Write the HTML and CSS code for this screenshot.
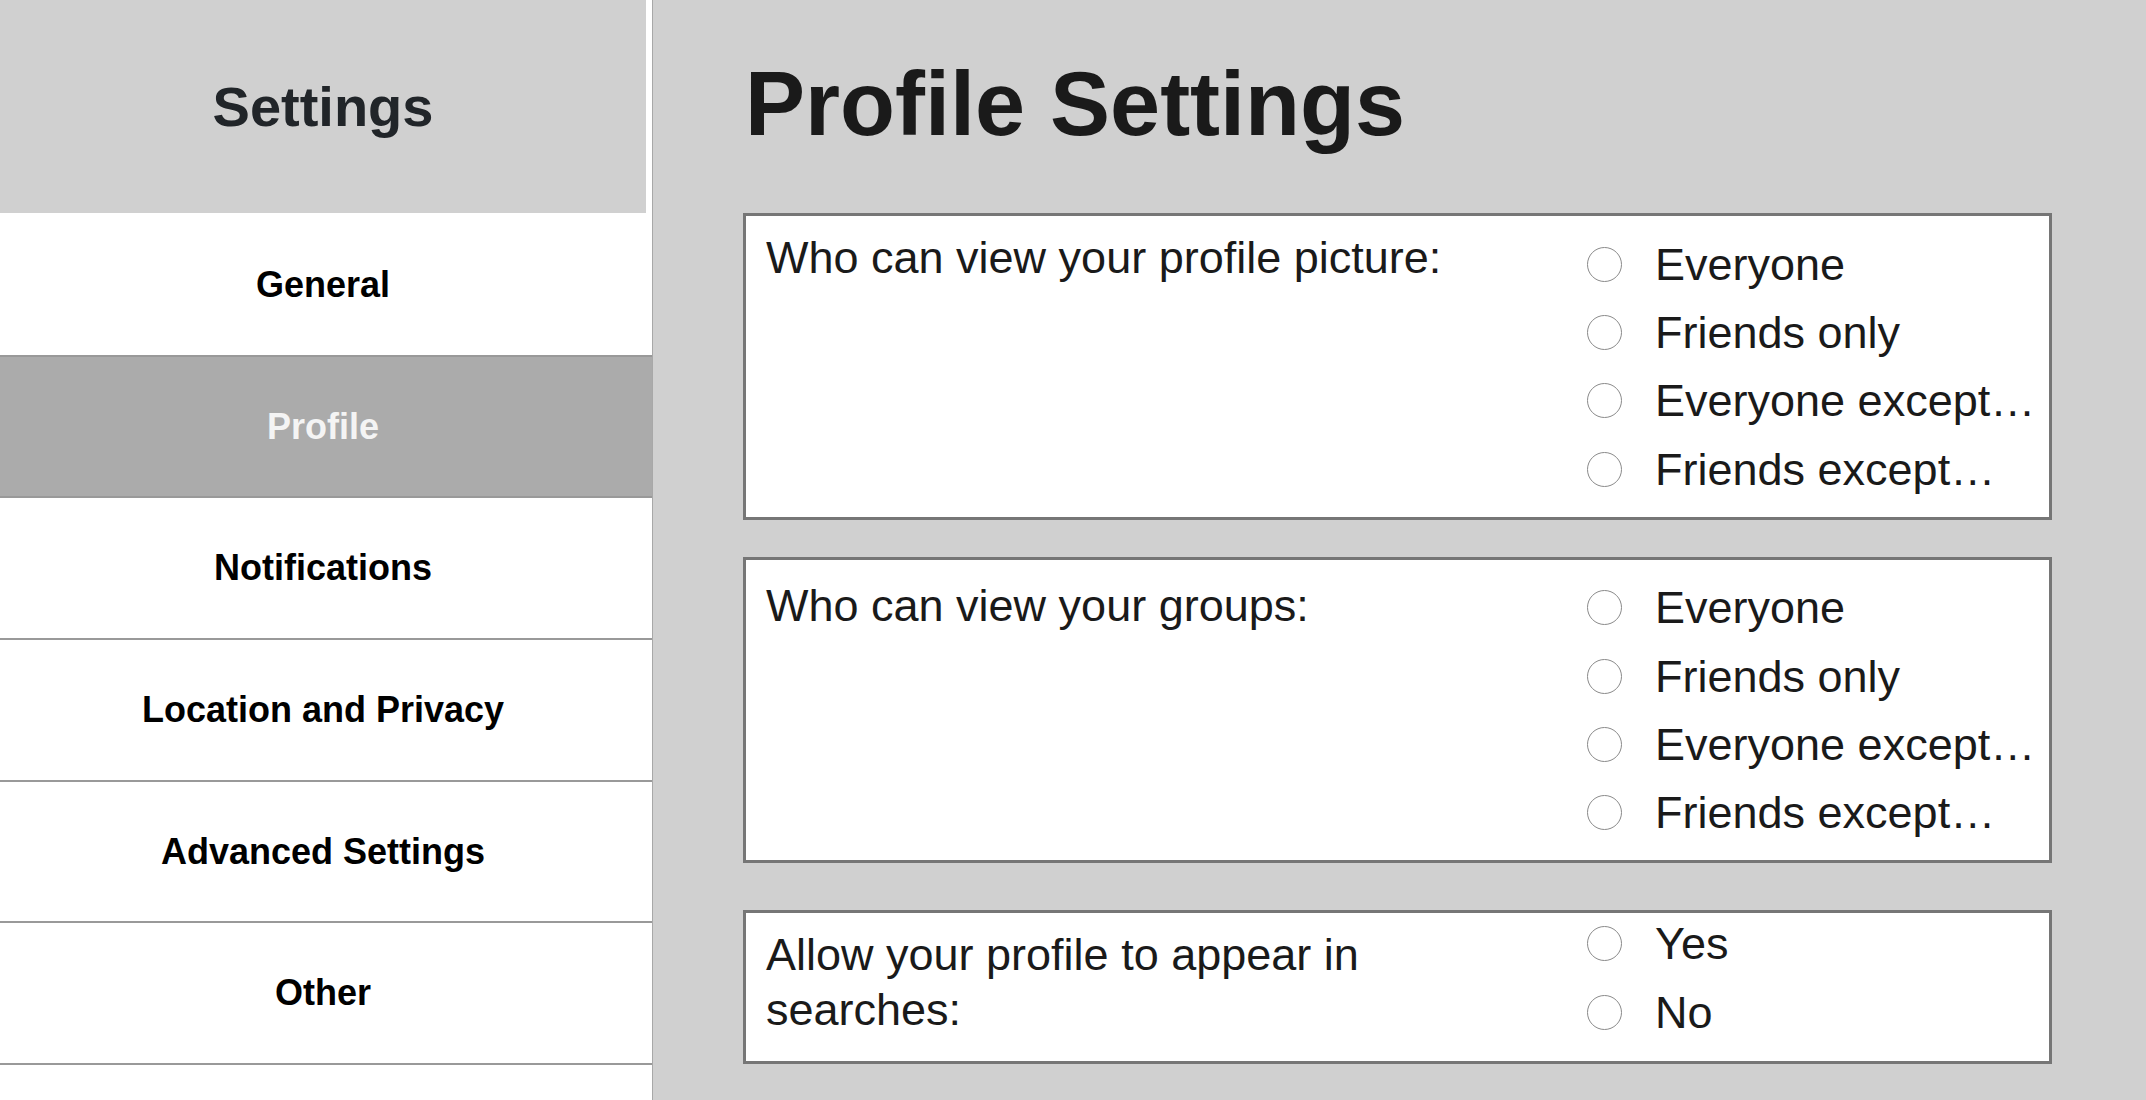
FILE: index.html
```html
<!DOCTYPE html>
<html lang="en">
<head>
<meta charset="utf-8">
<title>Profile Settings</title>
<link rel="stylesheet" href="styles.css">
</head>
<body>
<div class="app">
  <aside class="sidebar">
    <div class="sidebar-head"><h2 class="sidebar-title">Settings</h2></div>
    <nav class="nav">
      <a class="nav-item">General</a>
      <a class="nav-item is-active">Profile</a>
      <a class="nav-item">Notifications</a>
      <a class="nav-item">Location and Privacy</a>
      <a class="nav-item">Advanced Settings</a>
      <a class="nav-item">Other</a>
    </nav>
  </aside>
  <main class="main">
    <h1 class="page-title">Profile Settings</h1>

    <section class="card">
      <div class="q-label">Who can view your profile picture:</div>
      <div class="q-options">
        <label class="opt"><input type="radio" name="pic"><span>Everyone</span></label>
        <label class="opt"><input type="radio" name="pic"><span>Friends only</span></label>
        <label class="opt"><input type="radio" name="pic"><span>Everyone except…</span></label>
        <label class="opt"><input type="radio" name="pic"><span>Friends except…</span></label>
      </div>
    </section>

    <section class="card card-second">
      <div class="q-label q-label-low">Who can view your groups:</div>
      <div class="q-options">
        <label class="opt"><input type="radio" name="grp"><span>Everyone</span></label>
        <label class="opt"><input type="radio" name="grp"><span>Friends only</span></label>
        <label class="opt"><input type="radio" name="grp"><span>Everyone except…</span></label>
        <label class="opt"><input type="radio" name="grp"><span>Friends except…</span></label>
      </div>
    </section>

    <section class="card card-third">
      <div class="q-label">Allow your profile to appear in searches:</div>
      <div class="q-options q-options-tight">
        <label class="opt"><input type="radio" name="srch"><span>Yes</span></label>
        <label class="opt"><input type="radio" name="srch"><span>No</span></label>
      </div>
    </section>
  </main>
</div>
</body>
</html>
```

FILE: styles.css
```css
* { box-sizing: border-box; }

html, body {
  margin: 0;
  height: 100%;
  overflow: hidden;
}

body {
  font-family: "Liberation Sans", Arial, Helvetica, sans-serif;
  background: #d0d0d0;
  color: #1a1a1a;
}

.app {
  display: flex;
  height: 100vh;
}

/* Sidebar */
.sidebar {
  flex: 0 0 653px;
  background: #ffffff;
  border-right: 1px solid #a8a8a8;
  display: flex;
  flex-direction: column;
}

.sidebar-head {
  height: 213px;
  margin-right: 6px;
  background: #d0d0d0;
  display: flex;
  align-items: center;
  justify-content: center;
}

.sidebar-title {
  margin: 0;
  font-size: 56px;
  line-height: 1.2;
  font-weight: 700;
  color: #212529;
}

.nav {
  display: flex;
  flex-direction: column;
  padding-top: 2px;
}

.nav-item {
  height: 141.7px;
  display: flex;
  align-items: center;
  justify-content: center;
  padding-right: 6px;
  border-bottom: 2px solid #999999;
  font-size: 36px;
  font-weight: 700;
  color: #000000;
  text-decoration: none;
}

.nav-item.is-active {
  background: #ababab;
  color: #f4f4f4;
}

/* Main */
.main {
  flex: 1;
  padding: 51px 94px 0 90px;
}

.page-title {
  margin: 0 0 55px 2px;
  font-size: 90px;
  line-height: 107px;
  font-weight: 700;
  color: #1a1a1a;
}

.card {
  display: flex;
  background: #ffffff;
  border: 3px solid #767676;
  padding: 0 0 0 20px;
  font-size: 45px;
  color: #1a1a1a;
}

.card-second { margin-top: 37px; }
.card-third { margin-top: 46.5px; }

.q-label {
  flex: 0 0 821px;
  padding: 14px 90px 13px 0;
  line-height: 55px;
}

.q-label-low {
  padding-top: 18px;
}

.q-options {
  flex: 1;
  display: flex;
  flex-direction: column;
  padding: 14px 0 13px;
}

.q-options-tight {
  margin-top: -3px;
  padding: 0 0 15px;
}

.opt {
  height: 68.4px;
  display: flex;
  align-items: center;
  gap: 33px;
  line-height: 55px;
}

.opt input {
  appearance: none;
  -webkit-appearance: none;
  margin: 0;
  width: 35px;
  height: 35px;
  flex: 0 0 35px;
  border: 1px solid #8a8a8a;
  border-radius: 50%;
  background: #ffffff;
}
```
